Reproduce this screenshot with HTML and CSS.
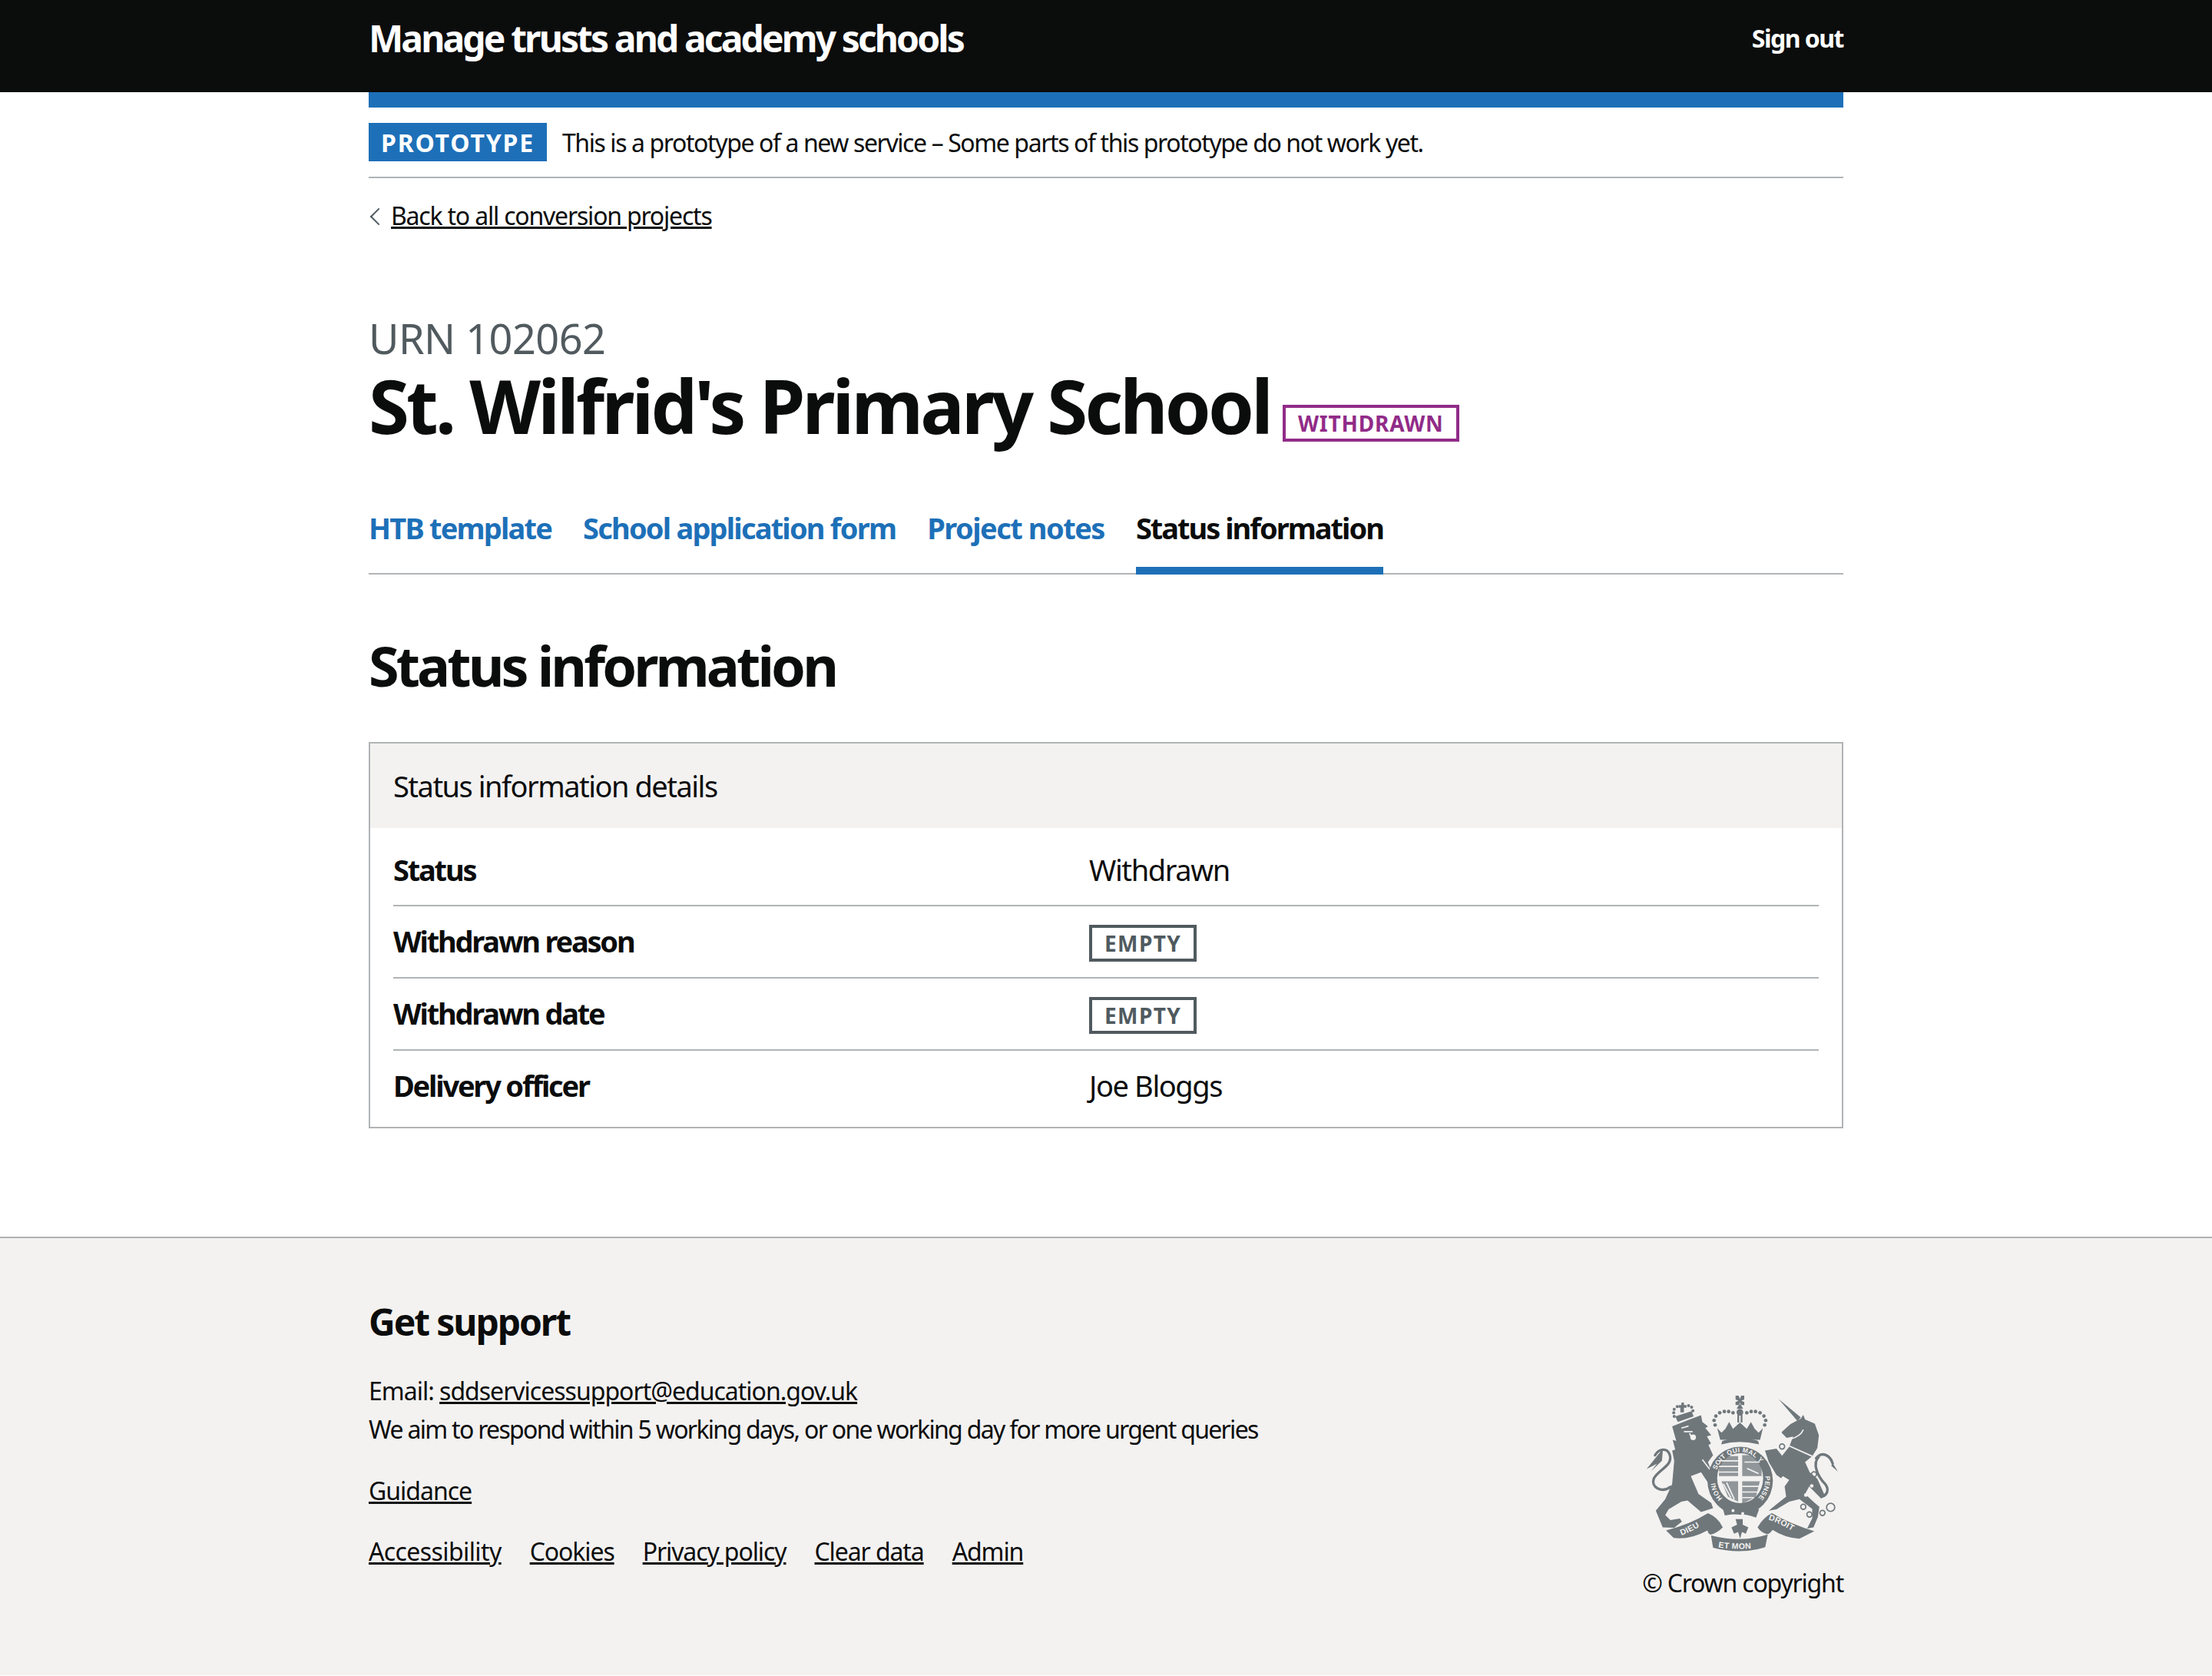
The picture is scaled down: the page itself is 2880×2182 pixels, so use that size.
FILE: index.html
```html
<!DOCTYPE html>
<html lang="en">
<head>
    <meta charset="UTF-8">
    <meta name="viewport" content="width=device-width, initial-scale=1.0">
    <title>Status information</title>
    <link rel="stylesheet" href="styles.css">
</head>
<body>
    <header class="site-header">
        <div class="container header-row">
            <a class="service-name" href="#">Manage trusts and academy schools</a>
            <a class="sign-out" href="#">Sign out</a>
        </div>
    </header>

    <div class="container">
        <div class="phase-banner">
            <strong class="phase-tag">PROTOTYPE</strong>
            <span>This is a prototype of a new service – Some parts of this prototype do not work yet.</span>
        </div>

        <a class="back-link" href="#">Back to all conversion projects</a>

        <main>
            <p class="caption">URN 102062</p>
            <div class="title-row">
                <h1>St. Wilfrid's Primary School</h1>
                <strong class="tag tag-purple">WITHDRAWN</strong>
            </div>

            <nav class="sub-nav">
                <a href="#">HTB template</a>
                <a href="#">School application form</a>
                <a href="#">Project notes</a>
                <a class="current" href="#">Status information</a>
            </nav>

            <h2>Status information</h2>

            <section class="card">
                <div class="card-heading">Status information details</div>
                <dl class="summary">
                    <div class="summary-row">
                        <dt>Status</dt>
                        <dd>Withdrawn</dd>
                    </div>
                    <div class="summary-row">
                        <dt>Withdrawn reason</dt>
                        <dd><strong class="tag tag-grey">EMPTY</strong></dd>
                    </div>
                    <div class="summary-row">
                        <dt>Withdrawn date</dt>
                        <dd><strong class="tag tag-grey">EMPTY</strong></dd>
                    </div>
                    <div class="summary-row">
                        <dt>Delivery officer</dt>
                        <dd>Joe Bloggs</dd>
                    </div>
                </dl>
            </section>
        </main>
    </div>

    <footer class="site-footer">
        <div class="container footer-row">
            <div class="footer-main">
                <h3>Get support</h3>
                <p class="footer-copy">Email: <a href="#">sddservicessupport@education.gov.uk</a><br>
                <span class="footer-note">We aim to respond within 5 working days, or one working day for more urgent queries</span></p>
                <p class="footer-guidance"><a href="#">Guidance</a></p>
                <div class="footer-links">
                    <a href="#">Accessibility</a>
                    <a href="#">Cookies</a>
                    <a href="#">Privacy policy</a>
                    <a href="#">Clear data</a>
                    <a href="#">Admin</a>
                </div>
            </div>
            <div class="footer-crest">
                <svg class="crest" viewBox="130 85 750 610" aria-hidden="true">
                    <defs>
                        <path id="garter-top" d="M406 376 A98 106 0 0 1 590 376"/>
                        <path id="garter-right" d="M596 400 A98 106 0 0 1 554 499"/>
                        <path id="garter-left" d="M429 487 A98 106 0 0 1 400 403"/>
                        <path id="scroll-left" d="M268 632 Q320 612 368 578"/>
                        <path id="scroll-mid" d="M412 678 Q498 692 584 678"/>
                        <path id="scroll-right" d="M608 570 Q670 590 735 638"/>
                    </defs>

                    <!-- lion -->
                    <path class="ink" d="M232 205 L300 178 L345 162 L350 188 L372 205 L362 212 L385 240 L368 244 L384 272 L374 278 L392 318 L372 345 L405 430 L382 440 L345 385 L305 400 L335 470 L385 505 L392 525 L345 540 L292 495 L268 500 L218 530 L205 552 L225 572 L262 566 L270 578 L240 602 L195 600 L168 535 L205 490 L232 430 L240 340 L232 300 L244 296 L234 258 L248 262 Z"/>
                    <path class="line" d="M225 442 C190 468 148 442 160 410 C175 375 238 360 222 315 C212 288 180 292 165 318"/>
                    <path class="ink" d="M196 292 L132 372 L172 352 L150 380 L192 340 Z"/>
                    <path class="paper-line" d="M268 212 L296 204 M278 226 L312 226 M300 232 L308 250 M350 335 L388 385"/>
                    <circle class="paper" cx="314" cy="248" r="11"/>

                    <!-- lion's crown -->
                    <path class="ink" d="M244 166 L308 146 L316 166 L254 188 Z"/>
                    <path class="ink" d="M258 122 H268 V112 H278 V122 H288 V132 H278 V150 H264 V132 H258 Z"/>
                    <g class="ink">
                        <circle cx="238" cy="152" r="6"/><circle cx="240" cy="138" r="6"/><circle cx="252" cy="128" r="6"/>
                        <circle cx="296" cy="124" r="6"/><circle cx="308" cy="130" r="6"/><circle cx="313" cy="144" r="6"/>
                        <circle cx="240" cy="166" r="6"/>
                    </g>

                    <!-- main crown -->
                    <path class="ink" d="M480 85 H492 L497 98 L502 85 H514 V100 L502 105 L514 110 V122 H502 L497 112 L492 122 H480 V110 L492 105 L480 100 Z"/>
                    <path class="ink" d="M497 116 L510 136 L484 136 Z"/>
                    <rect class="ink" x="487" y="160" width="7" height="30"/>
                    <rect class="ink" x="500" y="160" width="7" height="30"/>
                    <g class="ink">
                        <circle cx="400" cy="200" r="7"/><circle cx="396" cy="182" r="7"/><circle cx="403" cy="165" r="7"/>
                        <circle cx="418" cy="152" r="7"/><circle cx="436" cy="147" r="7"/><circle cx="453" cy="147" r="7"/>
                        <circle cx="470" cy="152" r="7"/><circle cx="497" cy="150" r="13"/>
                        <circle cx="524" cy="152" r="7"/><circle cx="541" cy="147" r="7"/><circle cx="558" cy="147" r="7"/>
                        <circle cx="576" cy="152" r="7"/><circle cx="591" cy="165" r="7"/><circle cx="598" cy="182" r="7"/>
                        <circle cx="594" cy="200" r="7"/>
                    </g>
                    <path class="ink" d="M408 212 L425 230 L440 215 L455 188 L470 215 L497 190 L524 215 L540 188 L555 215 L570 230 L587 212 L576 258 L420 258 Z"/>
                    <path class="ink" d="M428 262 Q497 240 568 262 L572 276 Q497 256 424 276 Z"/>

                    <!-- garter and shield -->
                    <ellipse class="ink" cx="498" cy="418" rx="128" ry="133"/>
                    <ellipse class="paper" cx="498" cy="408" rx="90" ry="98"/>
                    <path class="shield" d="M415 322 H490 V400 H415 Z M506 318 H582 V400 H506 Z M425 420 H490 V500 L450 480 Z M506 420 H575 L560 480 L506 508 Z"/>
                    <path class="paper-line" d="M415 340 H490 M415 362 H490 M415 384 H490 M515 345 L575 345 M525 370 L570 390 M506 440 H575 M506 462 H570 M506 484 H552 M445 425 L475 490 M432 430 L462 484"/>
                    <text class="crest-text garter"><textPath href="#garter-top">SOIT QUI MAL Y</textPath></text>
                    <text class="crest-text garter"><textPath href="#garter-right">PENSE</textPath></text>
                    <text class="crest-text garter"><textPath href="#garter-left">HONI</textPath></text>

                    <!-- buckle under the garter -->
                    <path class="ink" d="M428 520 Q500 512 572 530 L560 562 Q500 540 438 554 Z"/>
                    <circle class="paper" cx="470" cy="535" r="6"/><circle class="paper" cx="508" cy="546" r="6"/>

                    <!-- unicorn -->
                    <path class="ink" d="M648 98 L735 170 L722 184 Z"/>
                    <path class="ink" d="M660 228 L695 196 L735 175 L745 160 L752 178 L790 195 L806 240 L800 290 L780 322 L752 345 L770 385 L800 410 L830 478 L815 488 L768 440 L752 470 L790 505 L808 520 L802 560 L785 600 L760 605 L780 565 L780 528 L730 490 L690 500 L640 530 L610 535 L640 510 L678 480 L672 440 L690 415 L665 400 L658 408 L640 395 L610 345 L595 300 L640 292 L662 320 L690 285 L705 245 L680 250 L662 232 Z"/>
                    <path class="paper-line" d="M745 218 Q735 245 692 256 M690 282 L780 322"/>
                    <path class="line" d="M795 330 C820 300 850 320 860 350 M805 325 C780 350 800 400 830 430 C850 455 835 478 815 480"/>
                    <path class="ink" d="M840 315 L880 382 L855 360 L860 335 Z"/>
                    <g class="ring">
                        <circle cx="662" cy="284" r="10"/><circle cx="652" cy="368" r="11"/><circle cx="787" cy="393" r="10"/>
                        <circle cx="745" cy="520" r="10"/><circle cx="769" cy="550" r="10"/><circle cx="820" cy="544" r="10"/><circle cx="852" cy="522" r="16"/>
                    </g>
                    <g class="paper">
                        <circle cx="778" cy="438" r="7"/><circle cx="755" cy="474" r="7"/>
                    </g>

                    <!-- motto scroll -->
                    <path class="ink" d="M208 612 Q300 590 372 545 Q410 560 430 600 Q408 622 385 628 Q375 630 370 612 Q300 650 238 642 Z"/>
                    <path class="ink" d="M384 632 Q498 662 606 628 L596 678 Q498 708 392 680 Z"/>
                    <path class="ink" d="M566 600 Q590 560 622 545 Q700 590 788 615 L730 645 Q670 640 625 610 Q610 630 600 626 Q580 620 566 600 Z"/>
                    <text class="crest-text scroll"><textPath href="#scroll-left">DIEU</textPath></text>
                    <text class="crest-text scroll"><textPath href="#scroll-mid">ET MON</textPath></text>
                    <text class="crest-text scroll"><textPath href="#scroll-right">DROIT</textPath></text>
                    <path class="ink" d="M480 568 H508 V590 L530 600 L520 625 L505 618 L498 645 L490 618 L474 625 L464 600 L486 590 Z"/>
                </svg>
                <p class="copyright">© Crown copyright</p>
            </div>
        </div>
    </footer>
</body>
</html>
```

FILE: styles.css
```css
* {
    box-sizing: border-box;
}
body {
    margin: 0;
    font-family: "Noto Sans", Arial, sans-serif;
    font-size: 38px;
    color: #0b0c0c;
    background-color: #fff;
}
a {
    color: inherit;
}
.container {
    width: 1920px;
    margin: 0 auto;
}

.site-header {
    height: 120px;
    background-color: #0b0c0c;
    color: #fff;
}
.header-row {
    display: flex;
    justify-content: space-between;
    align-items: center;
    height: 98px;
}
.service-name {
    font-size: 48px;
    font-weight: 700;
    letter-spacing: -2.9px;
    text-decoration: none;
}
.sign-out {
    font-size: 32px;
    font-weight: 700;
    letter-spacing: -1.5px;
    text-decoration: none;
}

.phase-banner {
    display: flex;
    align-items: center;
    gap: 20px;
    height: 112px;
    border-top: 20px solid #1d70b8;
    border-bottom: 2px solid #b1b4b6;
    font-size: 32px;
    letter-spacing: -1.4px;
}
.phase-tag {
    display: flex;
    align-items: center;
    height: 50px;
    padding: 0 16px;
    background-color: #1d70b8;
    color: #fff;
    font-size: 32px;
    font-weight: 700;
    letter-spacing: 1.8px;
}

.back-link {
    position: relative;
    display: inline-block;
    margin-top: 30px;
    margin-left: 29px;
    font-size: 32px;
    line-height: 38px;
    letter-spacing: -1.2px;
}
.back-link::before {
    content: "";
    position: absolute;
    left: -24px;
    top: 12px;
    width: 14px;
    height: 14px;
    border-left: 2px solid #505a5f;
    border-bottom: 2px solid #505a5f;
    transform: rotate(45deg);
}

.caption {
    margin: 103px 0 0;
    font-size: 54px;
    line-height: 66px;
    letter-spacing: -0.5px;
    color: #505a5f;
}
.title-row {
    display: flex;
    align-items: flex-end;
    gap: 16px;
    height: 108px;
    margin-top: 1px;
}
h1 {
    margin: 0;
    font-size: 96px;
    line-height: 108px;
    font-weight: 700;
    letter-spacing: -3.8px;
}
.tag {
    display: inline-block;
    border: 4px solid;
    font-size: 28px;
    font-weight: 700;
    line-height: 40px;
    padding: 0 16px;
}
.tag-purple {
    color: #912b88;
    margin-bottom: 7px;
    letter-spacing: 0.8px;
}
.tag-grey {
    color: #505a5f;
    vertical-align: middle;
    letter-spacing: 1.4px;
}

.sub-nav {
    display: flex;
    gap: 41px;
    height: 128px;
    margin-top: 38px;
    padding-top: 40px;
    border-bottom: 2px solid #b1b4b6;
    font-size: 38px;
    font-weight: 700;
    letter-spacing: -1.8px;
}
.sub-nav a {
    height: 88px;
    line-height: 54px;
    color: #1d70b8;
    text-decoration: none;
}
.sub-nav a:nth-child(3) {
    letter-spacing: -1.5px;
}
.sub-nav .current {
    color: #0b0c0c;
    border-bottom: 10px solid #1d70b8;
    letter-spacing: -2px;
}

h2 {
    margin: 76px 0 0;
    font-size: 72px;
    line-height: 84px;
    font-weight: 700;
    letter-spacing: -3.9px;
}

.card {
    margin-top: 58px;
    border: 2px solid #b1b4b6;
}
.card-heading {
    height: 110px;
    padding: 0 30px;
    background-color: #f3f2f1;
    font-size: 38px;
    line-height: 110px;
    letter-spacing: -1.5px;
}
.summary {
    margin: 0;
    padding: 0 30px;
}
.summary-row {
    display: flex;
    align-items: center;
    height: 94px;
    padding-bottom: 2px;
    border-bottom: 2px solid #b1b4b6;
    letter-spacing: -1.4px;
}
.summary-row:first-child {
    height: 102px;
    padding-top: 8px;
    padding-bottom: 0;
}
.summary-row:last-child {
    height: 99px;
    padding-bottom: 10px;
    border-bottom: none;
}
.summary-row dt {
    width: 906px;
    font-weight: 700;
    letter-spacing: -2.2px;
}
.summary-row dd {
    margin: 0;
}

.site-footer {
    margin-top: 141px;
    height: 571px;
    border-top: 2px solid #b1b4b6;
    background-color: #f3f2f1;
    font-size: 32px;
    letter-spacing: -1px;
}
.footer-row {
    display: flex;
    justify-content: space-between;
}
.footer-main h3 {
    margin: 79px 0 0;
    font-size: 48px;
    line-height: 60px;
    font-weight: 700;
    letter-spacing: -2.1px;
}
.footer-copy {
    margin: 35px 0 0;
    line-height: 50px;
}
.footer-note {
    letter-spacing: -1.7px;
}
.footer-guidance {
    margin: 30px 0 0;
    line-height: 50px;
}
.footer-links {
    display: flex;
    gap: 37px;
    margin-top: 30px;
    line-height: 48px;
    letter-spacing: -1.1px;
}
.footer-links a:first-child {
    letter-spacing: -0.6px;
}
.footer-crest {
    display: flex;
    flex-direction: column;
    align-items: flex-end;
    padding-top: 205px;
}
.crest {
    display: block;
    width: 250px;
    height: 203px;
    margin-right: 7px;
    overflow: visible;
}
.copyright {
    margin: 21px 0 0;
    line-height: 40px;
    letter-spacing: -1.2px;
}

/* crest drawing */
.ink {
    fill: #6f777b;
}
.shield {
    fill: #6f777b;
    opacity: 0.75;
}
.paper {
    fill: #f3f2f1;
}
.line {
    fill: none;
    stroke: #6f777b;
    stroke-width: 10;
    stroke-linecap: round;
}
.ring {
    fill: none;
    stroke: #6f777b;
    stroke-width: 5;
}
.paper-line {
    fill: none;
    stroke: #f3f2f1;
    stroke-width: 5;
}
.crest-text {
    font-family: "Liberation Sans", Arial, sans-serif;
    font-weight: 700;
    fill: #f3f2f1;
    letter-spacing: 1px;
}
.garter {
    font-size: 26px;
}
.scroll {
    font-size: 32px;
}
```
